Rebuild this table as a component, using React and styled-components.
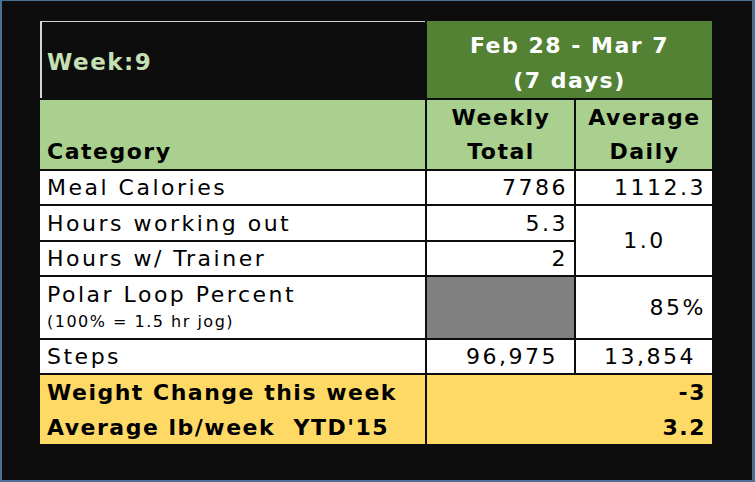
import React from 'react';
import styled, { createGlobalStyle } from 'styled-components';

const GlobalStyle = createGlobalStyle`
  html, body {
    margin: 0;
    padding: 0;
    background: #0d0d0d;
  }
`;

const Frame = styled.div`
  width: 755px;
  height: 482px;
  box-sizing: border-box;
  background: #0d0d0d;
  border: 2px solid #4c6f96;
  border-top-width: 1px;
  border-right-width: 3px;
  padding: 20px 0 0 38px;
  font-family: 'DejaVu Sans', 'Liberation Sans', sans-serif;
`;

const Sheet = styled.div`
  display: grid;
  grid-template-columns: 385px 147px 136px;
  grid-template-rows: 77px 69px 33px 34px 33px 61px 33px 69px;
  gap: 2px;
  width: 672px;
  background: #0d0d0d;
`;

const Cell = styled.div`
  box-sizing: border-box;
  display: flex;
  flex-direction: column;
  justify-content: ${p => p.$valign || 'flex-end'};
  align-items: ${p => (p.$align === 'right' ? 'flex-end' : p.$align === 'center' ? 'center' : 'flex-start')};
  text-align: ${p => p.$align || 'left'};
  grid-column: ${p => (p.$colSpan ? `span ${p.$colSpan}` : 'auto')};
  grid-row: ${p => (p.$rowSpan ? `span ${p.$rowSpan}` : 'auto')};
  background: ${p => p.$bg || '#ffffff'};
  color: ${p => p.$color || '#000000'};
  font-size: 22px;
  font-weight: ${p => (p.$bold ? 700 : 400)};
  letter-spacing: ${p => (p.$bold ? '1.5px' : '2.5px')};
  line-height: ${p => p.$lh || 30}px;
  padding: 0 ${p => p.$padRight ?? 6}px ${p => p.$padBottom ?? 1}px 7px;
  white-space: pre;
`;

const WeekCell = styled(Cell)`
  border-top: 1px solid #d4d4d4;
  border-left: 2px solid #d4d4d4;
  padding-left: 5px;
  padding-top: 3px;
  font-size: 23px;
`;

const Note = styled.span`
  font-size: 16px;
  letter-spacing: 1.5px;
  line-height: 26px;
`;

const GREEN_DARK = '#548235';
const GREEN_LIGHT = '#a9d08e';
const YELLOW = '#ffd966';

export default function App() {
  return (
    <>
      <GlobalStyle />
      <Frame>
        <Sheet>
          <WeekCell $bg="#0d0d0d" $color="#c6e0b4" $bold $valign="center" $padBottom={0}>
            Week:9
          </WeekCell>
          <Cell $colSpan={2} $bg={GREEN_DARK} $color="#ffffff" $bold $align="center" $lh={35} $padBottom={0} $padRight={7}>
            <span>Feb 28 - Mar 7</span>
            <span>(7 days)</span>
          </Cell>

          <Cell $bg={GREEN_LIGHT} $bold $lh={34} $padBottom={0}>Category</Cell>
          <Cell $bg={GREEN_LIGHT} $bold $align="center" $lh={34} $padBottom={0}>
            <span>Weekly</span>
            <span>Total</span>
          </Cell>
          <Cell $bg={GREEN_LIGHT} $bold $align="center" $lh={34} $padBottom={0}>
            <span>Average</span>
            <span>Daily</span>
          </Cell>

          <Cell>Meal Calories</Cell>
          <Cell $align="right">7786</Cell>
          <Cell $align="right">1112.3</Cell>

          <Cell>Hours working out</Cell>
          <Cell $align="right">5.3</Cell>
          <Cell $rowSpan={2} $align="center" $valign="center" $padBottom={0}>1.0</Cell>

          <Cell>Hours w/ Trainer</Cell>
          <Cell $align="right">2</Cell>

          <Cell $valign="center" $padBottom={0} $lh={28}>
            <span>Polar Loop Percent</span>
            <Note>(100% = 1.5 hr jog)</Note>
          </Cell>
          <Cell $bg="#808080" />
          <Cell $align="right" $valign="center" $padBottom={0}>85%</Cell>

          <Cell>Steps</Cell>
          <Cell $align="right" $padRight={16}>96,975</Cell>
          <Cell $align="right" $padRight={16}>13,854</Cell>

          <Cell $bg={YELLOW} $bold $lh={35} $padBottom={0} $valign="center">
            <span>Weight Change this week</span>
            <span>Average lb/week  YTD'15</span>
          </Cell>
          <Cell $colSpan={2} $bg={YELLOW} $bold $align="right" $lh={35} $padBottom={0} $valign="center">
            <span>-3</span>
            <span>3.2</span>
          </Cell>
        </Sheet>
      </Frame>
    </>
  );
}
